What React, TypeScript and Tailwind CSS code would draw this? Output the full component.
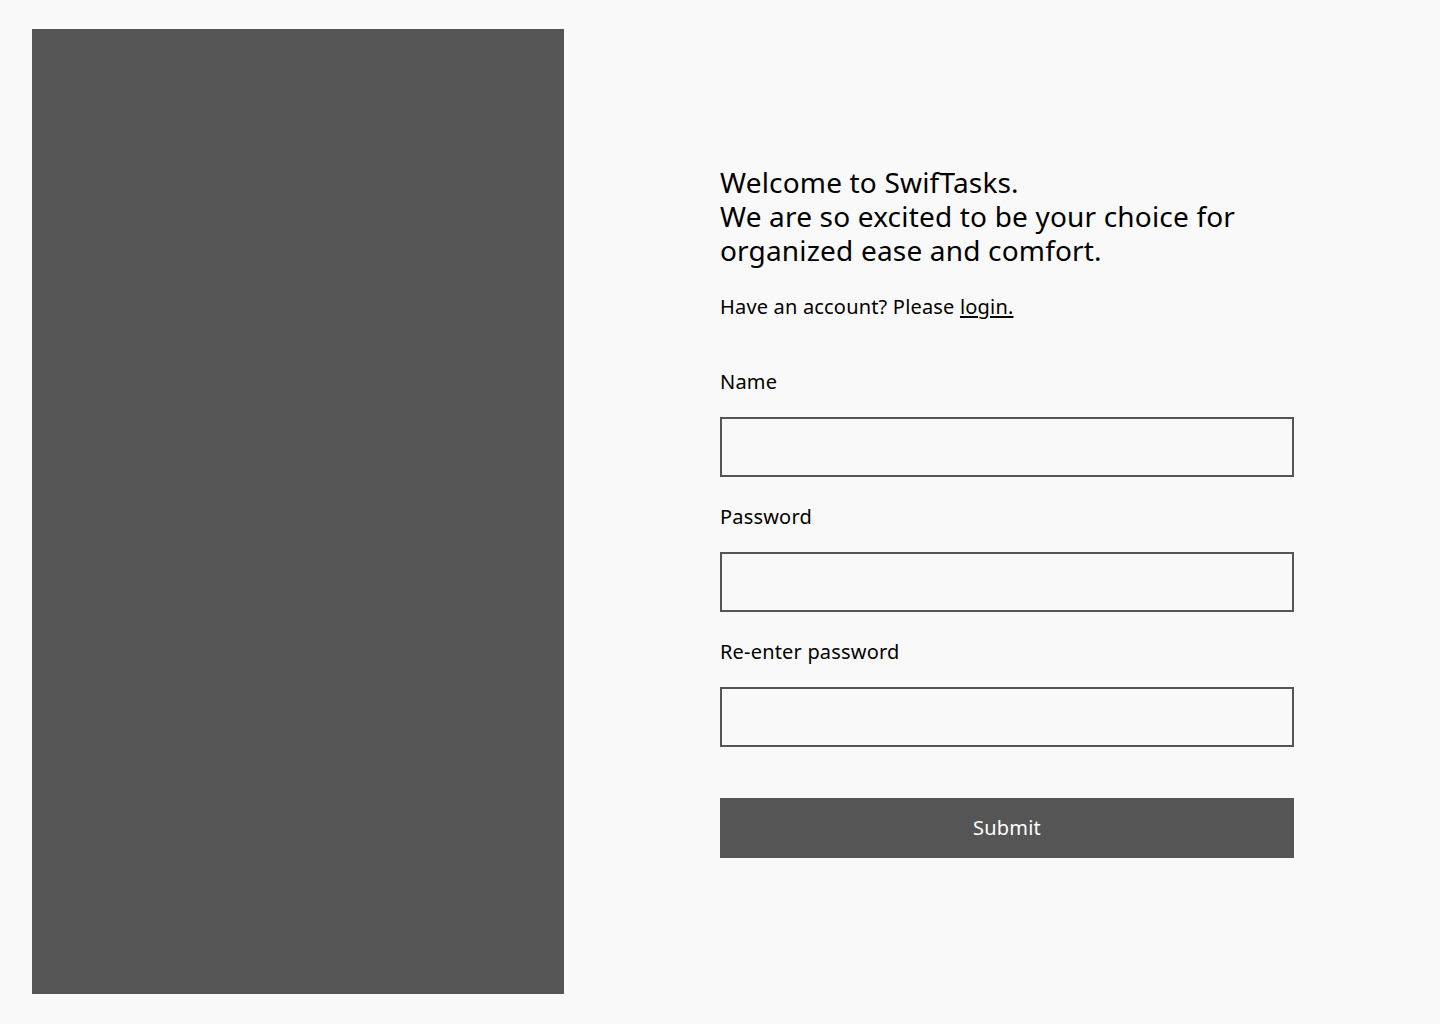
import { useState } from "react";

const font = { fontFamily: '"Noto Sans", "Open Sans", sans-serif' };

function Field({
  label,
  type,
  value,
  onChange,
}: {
  label: string;
  type: string;
  value: string;
  onChange: (v: string) => void;
}) {
  return (
    <label className="flex flex-col">
      <span className="text-[20px] leading-[28px] tracking-[0.18px] text-black">
        {label}
      </span>
      <input
        type={type}
        value={value}
        onChange={(e) => onChange(e.target.value)}
        className="mt-[21px] h-[60px] w-full border-2 border-[#555555] bg-[#f9f9f9] px-3 text-[20px] outline-none"
      />
    </label>
  );
}

export default function App() {
  const [name, setName] = useState("");
  const [password, setPassword] = useState("");
  const [confirm, setConfirm] = useState("");

  return (
    <div
      className="flex h-[1024px] w-full bg-[#f9f9f9] pl-8 pt-[29px] pb-[30px]"
      style={font}
    >
      <div className="w-[532px] shrink-0 bg-[#555555]" />

      <div className="flex flex-1 flex-col justify-center pl-[156px]">
        <div className="w-[574px]">
          <h1 className="text-[28px] leading-[34px] tracking-[0.18px] text-black">
            Welcome to SwifTasks.
            <br />
            We are so excited to be your choice for organized ease and comfort.
          </h1>
          <p className="mt-[26px] text-[20px] leading-[28px] tracking-[0.18px] text-black">
            Have an account? Please{" "}
            <a href="#" className="underline underline-offset-2">
              login.
            </a>
          </p>

          <form
            className="mt-[47px] flex flex-col gap-[26px]"
            onSubmit={(e) => e.preventDefault()}
          >
            <Field label="Name" type="text" value={name} onChange={setName} />
            <Field
              label="Password"
              type="password"
              value={password}
              onChange={setPassword}
            />
            <Field
              label="Re-enter password"
              type="password"
              value={confirm}
              onChange={setConfirm}
            />
            <button
              type="submit"
              className="mt-[25px] h-[60px] w-full bg-[#555555] text-[20px] tracking-[0.18px] text-white"
            >
              Submit
            </button>
          </form>
        </div>
      </div>
    </div>
  );
}
